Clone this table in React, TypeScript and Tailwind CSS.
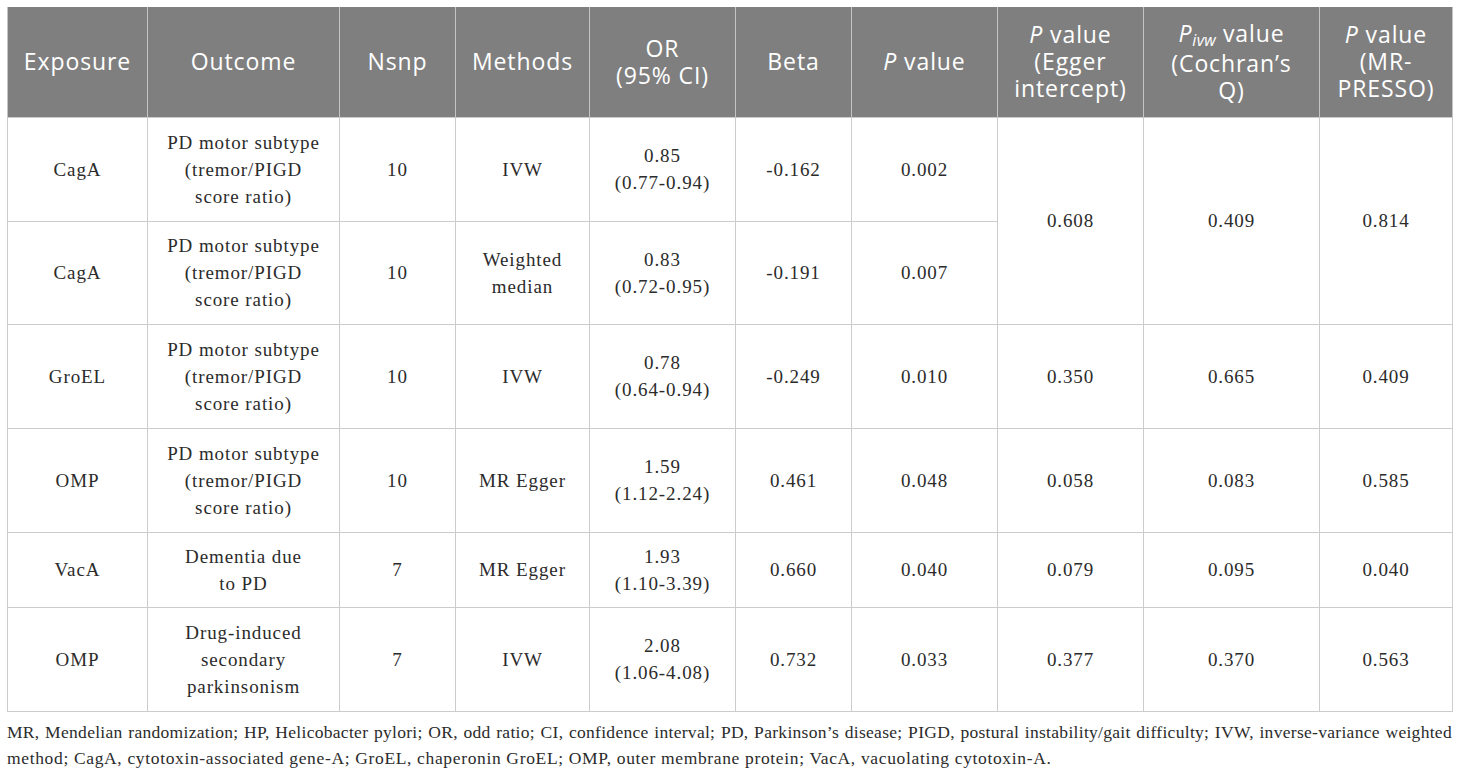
import React from "react";

const serif = { fontFamily: '"Liberation Serif", "Times New Roman", serif' };

type Row = {
  exp: string;
  out: string[];
  n: string;
  m: string[];
  or: string[];
  beta: string;
  p: string;
  extra?: [string, string, string];
  span?: boolean;
  h: string;
};

const rows: Row[] = [
  { exp: "CagA", out: ["PD motor subtype", "(tremor/PIGD", "score ratio)"], n: "10", m: ["IVW"], or: ["0.85", "(0.77-0.94)"], beta: "-0.162", p: "0.002", extra: ["0.608", "0.409", "0.814"], span: true, h: "h-[104px]" },
  { exp: "CagA", out: ["PD motor subtype", "(tremor/PIGD", "score ratio)"], n: "10", m: ["Weighted", "median"], or: ["0.83", "(0.72-0.95)"], beta: "-0.191", p: "0.007", h: "h-[103px]" },
  { exp: "GroEL", out: ["PD motor subtype", "(tremor/PIGD", "score ratio)"], n: "10", m: ["IVW"], or: ["0.78", "(0.64-0.94)"], beta: "-0.249", p: "0.010", extra: ["0.350", "0.665", "0.409"], h: "h-[104px]" },
  { exp: "OMP", out: ["PD motor subtype", "(tremor/PIGD", "score ratio)"], n: "10", m: ["MR Egger"], or: ["1.59", "(1.12-2.24)"], beta: "0.461", p: "0.048", extra: ["0.058", "0.083", "0.585"], h: "h-[104px]" },
  { exp: "VacA", out: ["Dementia due", "to PD"], n: "7", m: ["MR Egger"], or: ["1.93", "(1.10-3.39)"], beta: "0.660", p: "0.040", extra: ["0.079", "0.095", "0.040"], h: "h-[75px]" },
  { exp: "OMP", out: ["Drug-induced", "secondary", "parkinsonism"], n: "7", m: ["IVW"], or: ["2.08", "(1.06-4.08)"], beta: "0.732", p: "0.033", extra: ["0.377", "0.370", "0.563"], h: "h-[104px]" },
];

const widths = [140, 192, 116, 134, 146, 116, 146, 146, 176, 133];

function Lines({ l }: { l: string[] }) {
  return (
    <>
      {l.map((s, i) => (
        <div key={i} className="whitespace-nowrap">
          {s}
        </div>
      ))}
    </>
  );
}

const th = "border-x border-[#c4c4c4] bg-[#7f7f7f] px-0 text-center align-middle font-normal text-white";
const td = "border border-[#cccccc] px-0 text-center align-middle";

export default function App() {
  return (
    <div className="min-h-[773px] w-[1460px] bg-white pl-[7px] pt-[7px]">
      <table className="table-fixed border-collapse" style={{ width: 1445 }}>
        <colgroup>
          {widths.map((w, i) => (
            <col key={i} style={{ width: w }} />
          ))}
        </colgroup>
        <thead>
          <tr
            className="h-[110px] text-[23px] leading-[27px] tracking-[0.9px]"
            style={{ fontFamily: '"Open Sans", Lato, sans-serif' }}
          >
            <th className={th}>Exposure</th>
            <th className={th}>Outcome</th>
            <th className={th}>Nsnp</th>
            <th className={th}>Methods</th>
            <th className={th}>
              <div>OR</div>
              <div>(95% CI)</div>
            </th>
            <th className={th}>Beta</th>
            <th className={th}>
              <i>P</i> value
            </th>
            <th className={th}>
              <div>
                <i>P</i> value
              </div>
              <div>(Egger</div>
              <div>intercept)</div>
            </th>
            <th className={th}>
              <div className="whitespace-nowrap">
                <i>P</i>
                <span className="relative top-[4px] text-[16px] italic tracking-[0.3px]">ivw</span> value
              </div>
              <div>(Cochran’s</div>
              <div>Q)</div>
            </th>
            <th className={th}>
              <div>
                <i>P</i> value
              </div>
              <div>(MR-</div>
              <div>PRESSO)</div>
            </th>
          </tr>
        </thead>
        <tbody className="text-[19px] leading-[27px] tracking-[0.9px] text-[#2b2b2b]" style={serif}>
          {rows.map((r, i) => (
            <tr key={i} className={r.h}>
              <td className={td}>{r.exp}</td>
              <td className={td}>
                <Lines l={r.out} />
              </td>
              <td className={td}>{r.n}</td>
              <td className={td}>
                <Lines l={r.m} />
              </td>
              <td className={td}>
                <Lines l={r.or} />
              </td>
              <td className={td}>{r.beta}</td>
              <td className={td}>{r.p}</td>
              {r.extra &&
                r.extra.map((e, j) => (
                  <td key={j} className={td} rowSpan={r.span ? 2 : 1}>
                    {e}
                  </td>
                ))}
            </tr>
          ))}
        </tbody>
      </table>
      <div
        className="mt-[7px] w-[1445px] text-[17.5px] leading-[26px] text-[#2b2b2b]"
        style={serif}
      >
        <div className="text-justify tracking-[0.3px] [text-align-last:justify]">
          MR, Mendelian randomization; HP, Helicobacter pylori; OR, odd ratio; CI, confidence interval; PD, Parkinson’s disease; PIGD, postural instability/gait difficulty; IVW, inverse-variance weighted
        </div>
        <div className="whitespace-nowrap tracking-[0.65px]">
          method; CagA, cytotoxin-associated gene-A; GroEL, chaperonin GroEL; OMP, outer membrane protein; VacA, vacuolating cytotoxin-A.
        </div>
      </div>
    </div>
  );
}
